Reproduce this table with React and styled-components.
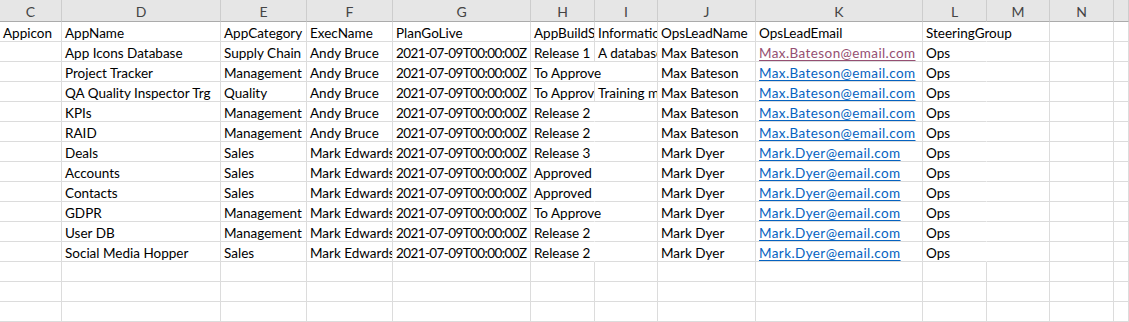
import React from "react";
import styled, { createGlobalStyle } from "styled-components";

const GlobalStyle = createGlobalStyle`
  html, body {
    margin: 0;
    padding: 0;
    background: #ffffff;
  }
  body {
    font-family: "Lato", "Liberation Sans", sans-serif;
    overflow: hidden;
  }
`;

const columns = [
  { key: "C", width: 62 },
  { key: "D", width: 159 },
  { key: "E", width: 86 },
  { key: "F", width: 86 },
  { key: "G", width: 138 },
  { key: "H", width: 64 },
  { key: "I", width: 63 },
  { key: "J", width: 98 },
  { key: "K", width: 167 },
  { key: "L", width: 64 },
  { key: "M", width: 63 },
  { key: "N", width: 64 },
  { key: "", width: 0 },
];

const header = ["Appicon", "AppName", "AppCategory", "ExecName", "PlanGoLive", "AppBuildStatus", "Information", "OpsLeadName", "OpsLeadEmail", "SteeringGroup"];

const rows = [
  ["", "App Icons Database", "Supply Chain", "Andy Bruce", "2021-07-09T00:00:00Z", "Release 1", "A database of app icons", "Max Bateson", "Max.Bateson@email.com", "Ops"],
  ["", "Project Tracker", "Management", "Andy Bruce", "2021-07-09T00:00:00Z", "To Approve", "", "Max Bateson", "Max.Bateson@email.com", "Ops"],
  ["", "QA Quality Inspector Trg", "Quality", "Andy Bruce", "2021-07-09T00:00:00Z", "To Approve", "Training module", "Max Bateson", "Max.Bateson@email.com", "Ops"],
  ["", "KPIs", "Management", "Andy Bruce", "2021-07-09T00:00:00Z", "Release 2", "", "Max Bateson", "Max.Bateson@email.com", "Ops"],
  ["", "RAID", "Management", "Andy Bruce", "2021-07-09T00:00:00Z", "Release 2", "", "Max Bateson", "Max.Bateson@email.com", "Ops"],
  ["", "Deals", "Sales", "Mark Edwards", "2021-07-09T00:00:00Z", "Release 3", "", "Mark Dyer", "Mark.Dyer@email.com", "Ops"],
  ["", "Accounts", "Sales", "Mark Edwards", "2021-07-09T00:00:00Z", "Approved", "", "Mark Dyer", "Mark.Dyer@email.com", "Ops"],
  ["", "Contacts", "Sales", "Mark Edwards", "2021-07-09T00:00:00Z", "Approved", "", "Mark Dyer", "Mark.Dyer@email.com", "Ops"],
  ["", "GDPR", "Management", "Mark Edwards", "2021-07-09T00:00:00Z", "To Approve", "", "Mark Dyer", "Mark.Dyer@email.com", "Ops"],
  ["", "User DB", "Management", "Mark Edwards", "2021-07-09T00:00:00Z", "Release 2", "", "Mark Dyer", "Mark.Dyer@email.com", "Ops"],
  ["", "Social Media Hopper", "Sales", "Mark Edwards", "2021-07-09T00:00:00Z", "Release 2", "", "Mark Dyer", "Mark.Dyer@email.com", "Ops"],
];

const EMPTY_ROWS = 3;
const DATE_COL = 4;
const EMAIL_COL = 8;

const Sheet = styled.div`
  display: grid;
  grid-template-columns: ${columns
    .map((c) => (c.width ? `${c.width}px` : "1fr"))
    .join(" ")};
  grid-template-rows: 22px;
  grid-auto-rows: 20px;
  width: 1129px;
  height: 322px;
  overflow: hidden;
  background: #ffffff;
`;

const ColHead = styled.div`
  background: #e6e6e6;
  border-right: 1px solid #cdcdcd;
  border-bottom: 1px solid #ababab;
  box-sizing: border-box;
  display: flex;
  align-items: center;
  justify-content: center;
  font-size: 14px;
  color: #444444;
  padding-top: 1px;
`;

const Cell = styled.div`
  position: relative;
  box-sizing: border-box;
  border-right: 1px solid ${({ $spill }) => ($spill ? "transparent" : "#dcdcdc")};
  border-bottom: 1px solid #dcdcdc;
  padding: 3px 0 0 3px;
  display: flex;
  align-items: center;
  white-space: nowrap;
  overflow: ${({ $spill }) => ($spill ? "visible" : "hidden")};
  z-index: ${({ $spill }) => ($spill ? 1 : 0)};
  font-size: 13.5px;
  letter-spacing: ${({ $tight }) => ($tight ? "-0.6px" : "0")};
  color: #000000;
`;

const Link = styled.span`
  color: ${({ $visited }) => ($visited ? "#954f72" : "#0563c1")};
  text-decoration: underline;
  text-underline-offset: 2px;
  letter-spacing: 0.4px;
`;

function renderRow(values, rowIndex, isHeader) {
  return columns.map((col, i) => {
    const value = values[i] || "";
    const next = values[i + 1] || "";
    const spill = value !== "" && next === "" && i < columns.length - 1;
    let content = value;
    if (!isHeader && i === EMAIL_COL && value) {
      content = <Link $visited={rowIndex === 0}>{value}</Link>;
    }
    return (
      <Cell
        key={`${rowIndex}-${i}`}
        $spill={spill}
        $tight={!isHeader && i === DATE_COL}
      >
        {content}
      </Cell>
    );
  });
}

export default function App() {
  return (
    <>
      <GlobalStyle />
      <Sheet>
        {columns.map((c, i) => (
          <ColHead key={`h-${i}`}>{c.key}</ColHead>
        ))}
        {renderRow(header, -1, true)}
        {rows.map((r, idx) => renderRow(r, idx, false))}
        {Array.from({ length: EMPTY_ROWS }).map((_, idx) =>
          renderRow([], 100 + idx, false)
        )}
      </Sheet>
    </>
  );
}
